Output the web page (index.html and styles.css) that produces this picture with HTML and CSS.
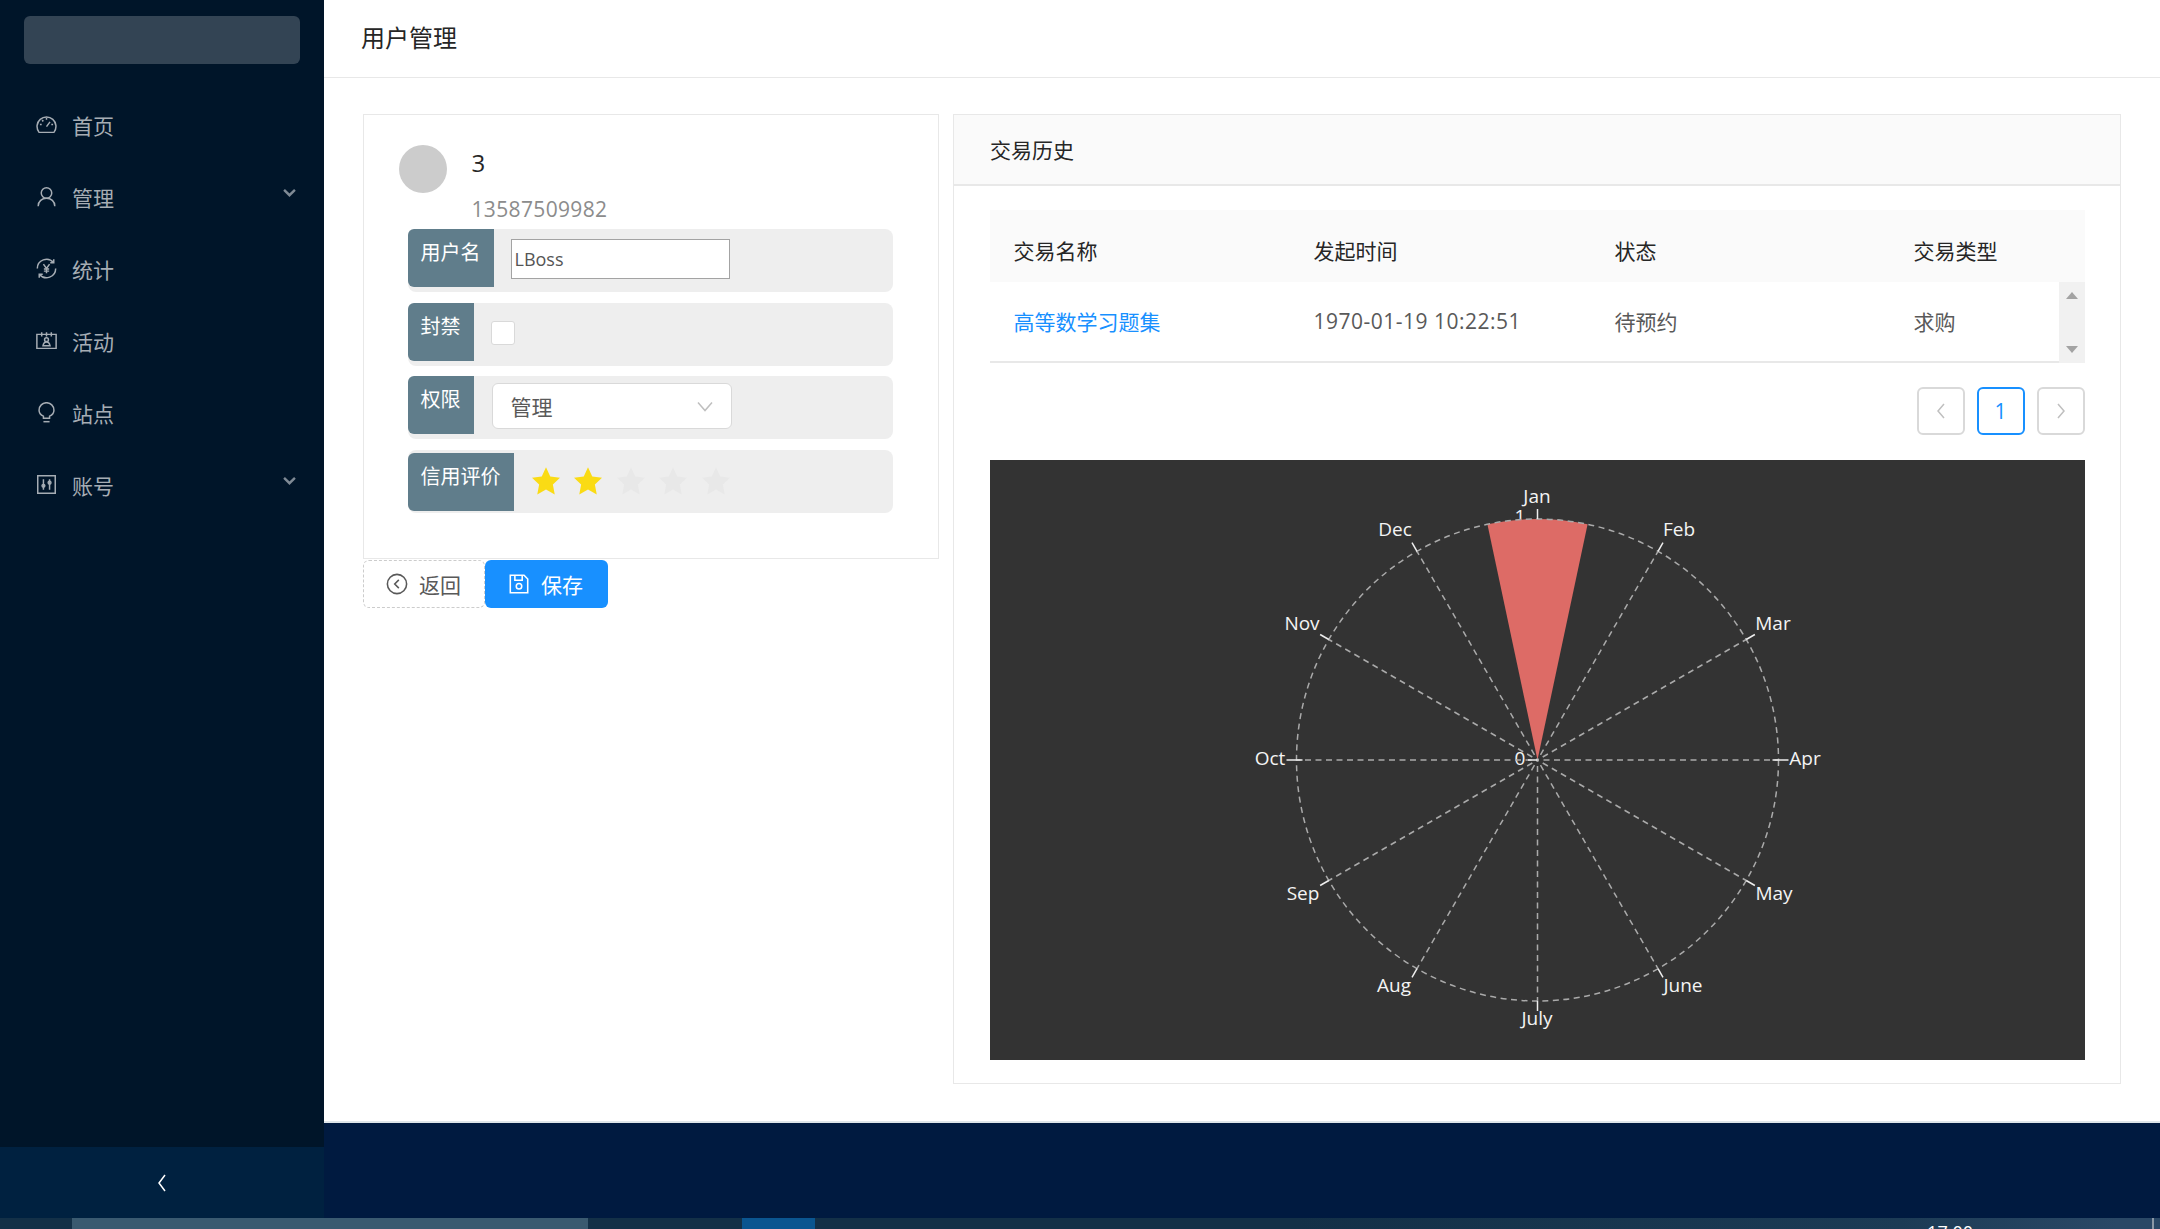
FILE: index.html
```html
<!DOCTYPE html>
<html lang="zh-CN">
<head>
  <meta charset="UTF-8" />
  <title>用户管理</title>
  <link rel="stylesheet" href="styles.css">
</head>
<body>

  <div class="app">

    <!-- SIDEBAR -->
    <div class="sider">
      <div class="logo"></div>
      <ul class="menu">
        <li>
          <svg class="menu-icon" viewBox="0 0 24 24"><path d="M3.200 20.500A10.800 10.800 0 1 1 20.800 20.500Q20.400 21 19.800 21H4.200Q3.600 21 3.200 20.500Z"/><path d="M12 14.500L16 9M12 4.500v2M4.500 12h2M17.500 12h2M7 7l1.400 1.400"/></svg>
          <span>首页</span>
        </li>
        <li>
          <svg class="menu-icon" viewBox="0 0 24 24"><circle cx="12" cy="8" r="6"/><path d="M2.500 23c0-5.500 4.300-9 9.500-9s9.500 3.500 9.500 9"/></svg>
          <span>管理</span>
          <svg class="menu-arrow" viewBox="0 0 12 8"><path d="M1 1.500L6 6.500L11 1.500"/></svg>
        </li>
        <li>
          <svg class="menu-icon" viewBox="0 0 24 24"><path d="M1.500 12A10.500 10.500 0 0 1 20 5.200M22.500 12A10.500 10.500 0 0 1 4 18.800"/><path d="M20.300 1.500v4H16.300M3.700 22.500v-4H7.700"/><path d="M8.500 7L12 12l3.500-5M12 12v5.500M9 12.500h6M9 15h6"/></svg>
          <span>统计</span>
        </li>
        <li>
          <svg class="menu-icon" viewBox="0 0 24 24"><path d="M1 5h22v16H1z"/><path d="M6.500 2.500v5M12 2.500v5M17.500 2.500v5"/><circle cx="12" cy="11" r="2.200"/><path d="M8 18c.5-2.800 2-4.200 4-4.200s3.500 1.400 4 4.200z"/></svg>
          <span>活动</span>
        </li>
        <li>
          <svg class="menu-icon" viewBox="0 0 24 24"><path d="M8.500 18.500v-2.300C5.500 14.800 3.500 12.200 3.500 9.300a8.500 8.500 0 0 1 17 0c0 2.900-2 5.500-5 6.900v2.300z"/><path d="M8.500 22.500h7"/></svg>
          <span>站点</span>
        </li>
        <li>
          <svg class="menu-icon" viewBox="0 0 24 24"><path d="M2 2h20v20H2z"/><path d="M8.500 6v12M15.500 6v12"/><circle cx="8.500" cy="13.500" r="1.600"/><circle cx="15.500" cy="10" r="1.600"/></svg>
          <span>账号</span>
          <svg class="menu-arrow" viewBox="0 0 12 8"><path d="M1 1.500L6 6.500L11 1.500"/></svg>
        </li>
      </ul>
      <div class="trigger">
        <svg viewBox="0 0 10 20"><path d="M8 2L2 10L8 18"/></svg>
      </div>
    </div>

    <div class="main">
      <div class="header">用户管理</div>

      <div class="content">

        <!-- USER CARD -->
        <div class="left-col">
          <div class="user-card">
            <div class="meta">
              <div class="avatar"></div>
              <div>
                <div class="meta-name">3</div>
                <div class="meta-phone">13587509982</div>
              </div>
            </div>

            <div class="field">
              <div class="field-label">用户名</div>
              <input class="field-input" type="text" value="LBoss">
            </div>
            <div class="field">
              <div class="field-label">封禁</div>
              <span class="field-check"></span>
            </div>
            <div class="field">
              <div class="field-label">权限</div>
              <div class="field-select">
                <span>管理</span>
                <svg viewBox="0 0 16 10"><path d="M1 1L8 9L15 1"/></svg>
              </div>
            </div>
            <div class="field">
              <div class="field-label field-label-low">信用评价</div>
              <div class="stars">
                <svg class="star star-on" viewBox="0 0 24 24"><path d="M12 1l3.400 7.300 7.800 1-5.700 5.500 1.500 7.900L12 18.800l-7 3.900 1.500-7.900L.8 9.300l7.800-1z"/></svg>
                <svg class="star star-on" viewBox="0 0 24 24"><path d="M12 1l3.400 7.300 7.800 1-5.700 5.500 1.500 7.900L12 18.800l-7 3.900 1.500-7.900L.8 9.300l7.800-1z"/></svg>
                <svg class="star" viewBox="0 0 24 24"><path d="M12 1l3.400 7.300 7.800 1-5.700 5.500 1.500 7.900L12 18.800l-7 3.900 1.500-7.900L.8 9.300l7.800-1z"/></svg>
                <svg class="star" viewBox="0 0 24 24"><path d="M12 1l3.400 7.300 7.800 1-5.700 5.500 1.500 7.900L12 18.800l-7 3.900 1.500-7.900L.8 9.300l7.800-1z"/></svg>
                <svg class="star" viewBox="0 0 24 24"><path d="M12 1l3.400 7.300 7.800 1-5.700 5.500 1.500 7.900L12 18.800l-7 3.900 1.500-7.900L.8 9.300l7.800-1z"/></svg>
              </div>
            </div>
          </div>

          <div class="actions">
            <button class="btn btn-back" type="button">
              <svg viewBox="0 0 24 24"><circle cx="12" cy="12" r="10.500"/><path d="M14 7.500L9.500 12L14 16.500"/></svg>
              <span>返回</span>
            </button>
            <button class="btn btn-save" type="button">
              <svg viewBox="0 0 24 24"><path d="M2.500 2.500h15l4 4v15h-19z"/><path d="M7.500 2.500v5.500h8V2.500"/><circle cx="12" cy="14.500" r="3"/></svg>
              <span>保存</span>
            </button>
          </div>
        </div>

        <!-- TRADE HISTORY -->
        <div class="trade-card">
          <div class="trade-head">交易历史</div>
          <div class="trade-body">

            <div class="table">
              <div class="table-row table-top">
                <div>交易名称</div>
                <div>发起时间</div>
                <div>状态</div>
                <div>交易类型</div>
              </div>
              <div class="table-scroll">
                <div class="table-row table-item">
                  <div><a href="#">高等数学习题集</a></div>
                  <div class="table-date">1970-01-19 10:22:51</div>
                  <div>待预约</div>
                  <div>求购</div>
                </div>
                <div class="scrollbar">
                  <span class="scroll-up"></span>
                  <span class="scroll-down"></span>
                </div>
              </div>
            </div>

            <div class="pager">
              <span class="page-btn"><svg viewBox="0 0 10 18"><path d="M8 2L2 9L8 16"/></svg></span>
              <span class="page-btn page-on">1</span>
              <span class="page-btn"><svg viewBox="0 0 10 18"><path d="M2 2L8 9L2 16"/></svg></span>
            </div>

            <svg class="chart" viewBox="0 1 1095 600">
              <text class="axis-num" x="530" y="57">1</text>
              <text class="axis-num" x="530" y="299">0</text>

              <path class="wedge" d="M547.500 301L497.400 65.300A241 241 0 0 1 597.600 65.300Z"/>

              <circle class="grid" cx="547.500" cy="301" r="241"/>
              <g class="grid grid-lines">
                <line x1="547.500" y1="301" x2="547.500" y2="60" transform="rotate(30 547.500 301)"/>
                <line x1="547.500" y1="301" x2="547.500" y2="60" transform="rotate(60 547.500 301)"/>
                <line x1="547.500" y1="301" x2="547.500" y2="60" transform="rotate(90 547.500 301)"/>
                <line x1="547.500" y1="301" x2="547.500" y2="60" transform="rotate(120 547.500 301)"/>
                <line x1="547.500" y1="301" x2="547.500" y2="60" transform="rotate(150 547.500 301)"/>
                <line x1="547.500" y1="301" x2="547.500" y2="60" transform="rotate(180 547.500 301)"/>
                <line x1="547.500" y1="301" x2="547.500" y2="60" transform="rotate(210 547.500 301)"/>
                <line x1="547.500" y1="301" x2="547.500" y2="60" transform="rotate(240 547.500 301)"/>
                <line x1="547.500" y1="301" x2="547.500" y2="60" transform="rotate(270 547.500 301)"/>
                <line x1="547.500" y1="301" x2="547.500" y2="60" transform="rotate(300 547.500 301)"/>
                <line x1="547.500" y1="301" x2="547.500" y2="60" transform="rotate(330 547.500 301)"/>
              </g>

              <g class="ticks">
                <line x1="547.500" y1="60" x2="547.500" y2="50"/>
                <line x1="547.500" y1="60" x2="547.500" y2="50" transform="rotate(30 547.500 301)"/>
                <line x1="547.500" y1="60" x2="547.500" y2="50" transform="rotate(60 547.500 301)"/>
                <line x1="547.500" y1="66" x2="547.500" y2="50" transform="rotate(90 547.500 301)"/>
                <line x1="547.500" y1="60" x2="547.500" y2="50" transform="rotate(120 547.500 301)"/>
                <line x1="547.500" y1="60" x2="547.500" y2="50" transform="rotate(150 547.500 301)"/>
                <line x1="547.500" y1="60" x2="547.500" y2="50" transform="rotate(180 547.500 301)"/>
                <line x1="547.500" y1="60" x2="547.500" y2="50" transform="rotate(210 547.500 301)"/>
                <line x1="547.500" y1="60" x2="547.500" y2="50" transform="rotate(240 547.500 301)"/>
                <line x1="547.500" y1="66" x2="547.500" y2="50" transform="rotate(270 547.500 301)"/>
                <line x1="547.500" y1="60" x2="547.500" y2="50" transform="rotate(300 547.500 301)"/>
                <line x1="547.500" y1="60" x2="547.500" y2="50" transform="rotate(330 547.500 301)"/>
                <line x1="538" y1="301" x2="547.500" y2="301"/>
              </g>

              <text class="axis-month" x="547" y="37">Jan</text>
              <text class="axis-month" x="689" y="70">Feb</text>
              <text class="axis-month" x="783" y="164">Mar</text>
              <text class="axis-month" x="815" y="299">Apr</text>
              <text class="axis-month" x="784" y="434">May</text>
              <text class="axis-month" x="693" y="526">June</text>
              <text class="axis-month" x="547" y="559">July</text>
              <text class="axis-month" x="404" y="526">Aug</text>
              <text class="axis-month" x="313" y="434">Sep</text>
              <text class="axis-month" x="280" y="299">Oct</text>
              <text class="axis-month" x="312" y="164">Nov</text>
              <text class="axis-month" x="405" y="70">Dec</text>
            </svg>

          </div>
        </div>

      </div>
    </div>
  </div>

  <!-- TASKBAR -->
  <div class="taskbar">
    <span class="task task-active"></span>
    <span class="task task-blue"></span>
    <span class="task-time">17:00</span>
    <span class="task-edge"></span>
  </div>

</body>
</html>
```

FILE: styles.css
```css
html, body { height: 100%; }

body {
  margin: 0;
  height: 1229px;
  overflow: hidden;
  display: flex;
  flex-direction: column;
  background: #001a40;
  color: #595959;
  font-family: "Open Sans", "Noto Sans CJK SC", sans-serif;
  font-size: 21px;
}

.app { display: flex; flex: 1; min-height: 0; }

/* sidebar */
.sider {
  width: 324px;
  flex: none;
  display: flex;
  flex-direction: column;
  background: #001529;
}

.logo {
  height: 48px;
  margin: 16px 24px 24.500px;
  border-radius: 6px;
  background: #334454;
}

.menu { list-style: none; margin: 0; padding: 0; flex: 1; }

.menu li {
  height: 72px;
  display: flex;
  align-items: center;
  padding: 0 36px;
  color: #a6adb4;
}

.menu li span { flex: 1; margin-left: 15px; }

.menu-icon {
  width: 21px;
  height: 21px;
  flex: none;
  fill: none;
  stroke: #a6adb4;
  stroke-width: 1.700;
}

.menu-arrow {
  width: 13px;
  height: 9px;
  margin: -8px -8px 0 0;
  fill: none;
  stroke: #7f8a95;
  stroke-width: 2.200;
}

.trigger {
  height: 71px;
  display: flex;
  align-items: center;
  justify-content: center;
  background: #002140;
}

.trigger svg {
  width: 10px;
  height: 20px;
  fill: none;
  stroke: #fff;
  stroke-width: 1.500;
}

/* main */
.main { flex: 1; min-width: 0; display: flex; flex-direction: column; }

.header {
  height: 73px;
  padding: 0 0 4px 37px;
  display: flex;
  align-items: center;
  background: #fff;
  border-bottom: 1px solid #e8e8e8;
  color: #262626;
  font-size: 24px;
}

.content {
  height: 1045px;
  box-sizing: border-box;
  display: flex;
  gap: 14px;
  padding: 36px 39px 37px;
  background: #fff;
  border-bottom: 2px solid #dfe6ea;
}

.left-col { width: 576px; flex: none; }

/* user card */
.user-card {
  height: 445px;
  box-sizing: border-box;
  padding: 30px 45.500px 0 43.500px;
  border: 1.500px solid #e8e8e8;
}

.meta { display: flex; gap: 25px; margin-left: -9px; }

.avatar {
  width: 48px;
  height: 48px;
  flex: none;
  border-radius: 50%;
  background: #ccc;
}

.meta-name {
  color: #262626;
  font-size: 24px;
  line-height: 36px;
}

.meta-phone {
  margin-top: 10px;
  color: #8c8c8c;
  line-height: 36px;
  letter-spacing: .35px;
}

.field {
  height: 63px;
  display: flex;
  align-items: flex-start;
  margin-bottom: 10.500px;
  border-radius: 8px;
  background: #eee;
}

.meta + .field { margin-top: 2px; }

.field-label {
  height: 50px;
  padding: 8px 13px 0;
  border-radius: 6px 0 0 6px;
  background: #607d8b;
  color: #fff;
  font-size: 20px;
  line-height: 32px;
  white-space: nowrap;
}

.field-label-low { margin-top: 3px; }

.field-input {
  width: 219px;
  height: 40px;
  box-sizing: border-box;
  margin: 10px 0 0 17px;
  padding: 0 3px;
  border: 1.500px solid #a3a3a3;
  background: #fff;
  color: #555;
  font-family: inherit;
  font-size: 18px;
}

.field-check {
  width: 24px;
  height: 24px;
  box-sizing: border-box;
  margin: 18px 0 0 17px;
  border: 1.500px solid #d9d9d9;
  border-radius: 3px;
  background: #fff;
}

.field-select {
  width: 240px;
  height: 46px;
  box-sizing: border-box;
  margin: 7px 0 0 18px;
  padding: 0 18px;
  display: flex;
  align-items: center;
  justify-content: space-between;
  border: 1.500px solid #d9d9d9;
  border-radius: 6px;
  background: #fff;
}

.field-select svg {
  width: 16px;
  height: 11px;
  fill: none;
  stroke: #bfbfbf;
  stroke-width: 1.500;
}

.stars { display: flex; gap: 12.500px; margin: 16px 0 0 17px; }

.star { width: 30px; height: 30px; fill: #e8e8e8; }
.star-on { fill: #fadb14; }

.actions { display: flex; margin-top: 1px; }

.btn {
  height: 48px;
  box-sizing: border-box;
  display: flex;
  align-items: center;
  gap: 11px;
  font-family: inherit;
  font-size: 21px;
  border-radius: 6px;
  padding: 0;
}

.btn svg { width: 22px; height: 22px; fill: none; stroke-width: 1.700; }

.btn-back {
  width: 122px;
  padding-left: 22px;
  border: 1.500px dashed #ccc;
  background: #fff;
  color: #595959;
}

.btn-back svg { stroke: #595959; }

.btn-save {
  width: 123px;
  padding-left: 23px;
  border: none;
  background: #1890ff;
  color: #fff;
}

.btn-save svg { stroke: #fff; }

/* trade card */
.trade-card {
  flex: 1;
  min-width: 0;
  border: 1.500px solid #e8e8e8;
}

.trade-head {
  height: 68.500px;
  padding-left: 36px;
  display: flex;
  align-items: center;
  background: #fafafa;
  border-bottom: 2px solid #e8e8e8;
  color: #262626;
}

.trade-body { padding: 24px 35.500px 0; }

.table-row {
  display: grid;
  grid-template-columns: 300px 301px 299px 1fr;
  padding-left: 24px;
}

.table-top {
  height: 63px;
  padding-top: 9px;
  align-items: center;
  background: #fafafa;
  color: #262626;
}

.table-scroll { display: flex; height: 81px; }

.table-item {
  flex: 1;
  align-items: center;
  border-bottom: 2px solid #e8e8e8;
}

.table-item a { color: #1890ff; text-decoration: none; }

.table-date { letter-spacing: .5px; }

.scrollbar {
  width: 26px;
  display: flex;
  flex-direction: column;
  justify-content: space-between;
  align-items: center;
  padding: 10px 0;
  box-sizing: border-box;
  background: #f1f1f1;
}

.scroll-up, .scroll-down {
  width: 0;
  height: 0;
  border-left: 6px solid transparent;
  border-right: 6px solid transparent;
}

.scroll-up { border-bottom: 7px solid #a3a3a3; }
.scroll-down { border-top: 7px solid #a3a3a3; }

.pager {
  display: flex;
  justify-content: flex-end;
  gap: 12px;
  margin: 24px 0 25px;
}

.page-btn {
  width: 48px;
  height: 48px;
  box-sizing: border-box;
  display: flex;
  align-items: center;
  justify-content: center;
  border: 2px solid #d9d9d9;
  border-radius: 6px;
  background: #fff;
}

.page-btn svg {
  width: 10px;
  height: 18px;
  fill: none;
  stroke: #bfbfbf;
  stroke-width: 1.500;
}

.page-on { border-color: #1890ff; color: #1890ff; }

/* chart */
.chart { display: block; width: 1095px; height: 600px; background: #333; }

.wedge { fill: #dd6b66; }

.grid {
  fill: none;
  stroke: #aaa;
  stroke-width: 1.500;
  stroke-dasharray: 6 4.500;
}

.grid-lines { stroke-dashoffset: -6; }

.ticks { stroke: #eee; stroke-width: 1.500; }

.axis-month, .axis-num {
  fill: #f4f4f4;
  font-size: 19px;
  text-anchor: middle;
  dominant-baseline: central;
}

/* taskbar */
.taskbar {
  height: 11px;
  flex: none;
  overflow: hidden;
  display: flex;
  background: linear-gradient(90deg, #133047 0%, #133047 60%, #1c3b55 88%, #2a4866 98%);
  padding-left: 72px;
}

.task { height: 100%; }
.task-active { width: 516px; background: #3a5a70; }
.task-blue { width: 73px; margin-left: 154px; background: #0a5590; }

.task-time {
  margin-left: auto;
  margin-right: 179px;
  padding-top: 5px;
  color: #fff;
  font-size: 18px;
  line-height: 18px;
}

.task-edge { width: 2px; margin-right: 6px; background: #8a98a6; }
```
